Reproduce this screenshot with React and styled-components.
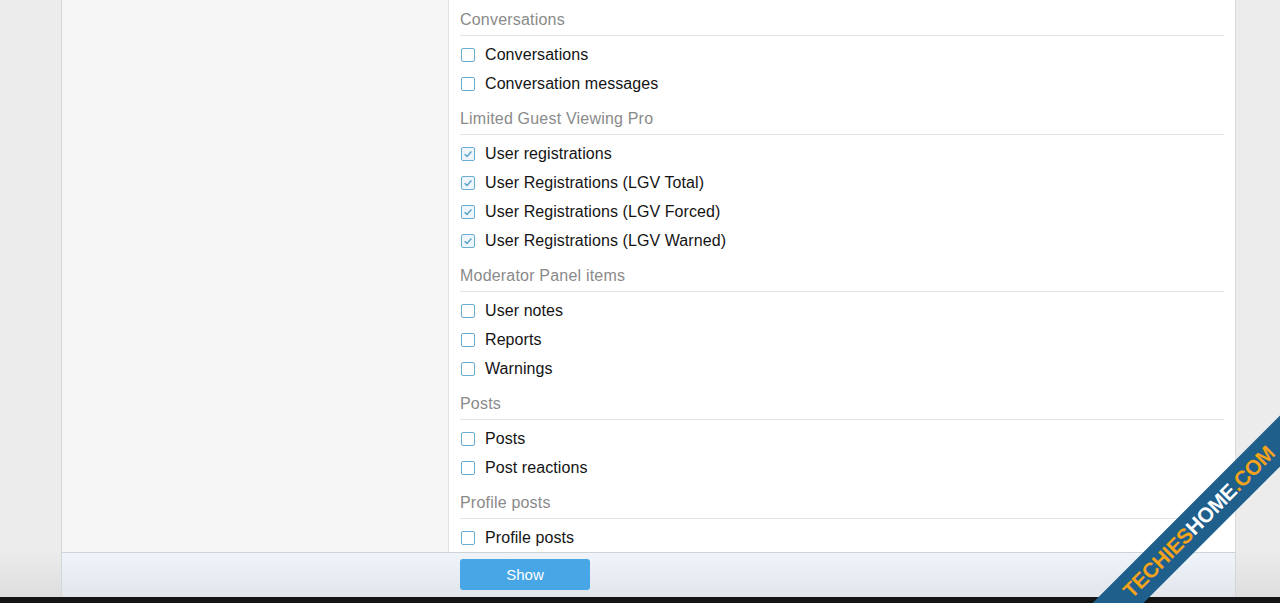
import React from 'react';
import styled, { createGlobalStyle } from 'styled-components';

const colors = {
  page: '#ececec',
  sidebar: '#f6f6f6',
  border: '#dadada',
  heading: '#8a8a8a',
  text: '#141414',
  rule: '#e3e3e3',
  check: '#6aaed2',
  button: '#47a6e6',
  ribbon: '#1f5f8b',
  orange: '#f5a31a',
};

const sections = [
  { title: 'Conversations', items: [['Conversations', false], ['Conversation messages', false]] },
  {
    title: 'Limited Guest Viewing Pro',
    items: [
      ['User registrations', true],
      ['User Registrations (LGV Total)', true],
      ['User Registrations (LGV Forced)', true],
      ['User Registrations (LGV Warned)', true],
    ],
  },
  { title: 'Moderator Panel items', items: [['User notes', false], ['Reports', false], ['Warnings', false]] },
  { title: 'Posts', items: [['Posts', false], ['Post reactions', false]] },
  { title: 'Profile posts', items: [['Profile posts', false]] },
];

const GlobalStyle = createGlobalStyle`
  html, body {
    margin: 0;
    padding: 0;
    background: ${colors.page};
    overflow: hidden;
  }
  * { box-sizing: border-box; }
`;

const Checkbox = ({ checked }) => (
  <Box checked={checked}>
    {checked && (
      <svg width="10" height="10" viewBox="0 0 10 10">
        <path d="M1.6 5.2 L4 7.4 L8.4 2.6" fill="none" stroke="#5aa3c9" strokeWidth="1.5" />
      </svg>
    )}
  </Box>
);

const App = () => (
  <Page>
    <GlobalStyle />
    <Main>
      <Frame>
        <Sidebar />
        <Content>
          {sections.map((section) => (
            <Section key={section.title}>
              <Heading>{section.title}</Heading>
              <List>
                {section.items.map(([label, checked]) => (
                  <Item key={label}>
                    <Checkbox checked={checked} />
                    <Label>{label}</Label>
                  </Item>
                ))}
              </List>
            </Section>
          ))}
        </Content>
      </Frame>
    </Main>
    <FooterRow>
      <FooterPanel>
        <Button>Show</Button>
      </FooterPanel>
    </FooterRow>
    <BottomStrip />
    <Ribbon>
      <Orange>TECHIES</Orange>HOME<Orange>.COM</Orange>
    </Ribbon>
  </Page>
);

const Page = styled.div`
  position: relative;
  width: 1280px;
  height: 603px;
  display: flex;
  flex-direction: column;
  overflow: hidden;
  font-family: 'Liberation Sans', Arial, sans-serif;
`;

const Main = styled.div`
  height: 552px;
  display: flex;
  padding: 0 44px 0 61px;
`;

const Frame = styled.div`
  flex: 1;
  display: flex;
  border-left: 1px solid #d6d6d6;
  border-right: 1px solid ${colors.border};
`;

const Sidebar = styled.div`
  width: 387px;
  background: ${colors.sidebar};
  border-right: 1px solid #e2e2e2;
`;

const Content = styled.div`
  flex: 1;
  background: #fff;
  padding: 10px 11px 0 11px;
  overflow: hidden;
`;

const Section = styled.div`
  & + & {
    margin-top: 11px;
  }
`;

const Heading = styled.div`
  font-size: 16px;
  line-height: 20px;
  letter-spacing: 0.2px;
  color: ${colors.heading};
  padding-bottom: 5px;
  border-bottom: 1px solid ${colors.rule};
`;

const List = styled.div`
  padding-top: 4px;
  display: flex;
  flex-direction: column;
`;

const Item = styled.label`
  height: 29px;
  display: flex;
  align-items: center;
  gap: 10px;
  padding-left: 1px;
`;

const Box = styled.span`
  width: 14px;
  height: 14px;
  border: 1.5px solid ${colors.check};
  border-radius: 2px;
  background: ${(p) => (p.checked ? '#eef6fb' : '#fff')};
  display: flex;
  align-items: center;
  justify-content: center;
`;

const Label = styled.span`
  font-size: 16px;
  letter-spacing: 0.08px;
  color: ${colors.text};
`;

const FooterRow = styled.div`
  height: 45px;
  display: flex;
  padding: 0 44px 0 61px;
  background: linear-gradient(#ebebeb, #dedede);
`;

const FooterPanel = styled.div`
  flex: 1;
  border-top: 1px solid #cfd3d6;
  border-left: 1px solid #d6d6d6;
  border-right: 1px solid #d4d6d8;
  background: linear-gradient(#eef4fa, #e2e6eb);
  padding: 6px 0 0 398px;
`;

const Button = styled.button`
  width: 130px;
  height: 31px;
  border: none;
  border-radius: 3px;
  background: ${colors.button};
  color: #fff;
  font-family: inherit;
  font-size: 15px;
  cursor: pointer;
`;

const BottomStrip = styled.div`
  height: 6px;
  background: #141414;
`;

const Ribbon = styled.div`
  position: absolute;
  left: 989px;
  top: 504px;
  width: 420px;
  height: 36px;
  transform: rotate(-45deg);
  background: ${colors.ribbon};
  color: #fff;
  font-size: 21px;
  font-weight: bold;
  display: flex;
  align-items: center;
  justify-content: center;
  letter-spacing: -0.3px;
`;

const Orange = styled.span`
  color: ${colors.orange};
`;

export default App;
